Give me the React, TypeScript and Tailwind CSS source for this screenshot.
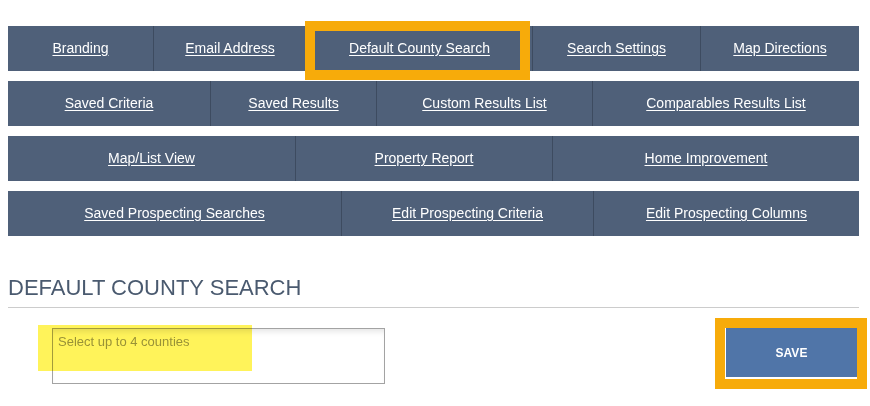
export default function App() {
  const rows: { cols: string; items: string[] }[] = [
    {
      cols: "grid-cols-[145px_153px_226px_168px_159px]",
      items: ["Branding", "Email Address", "Default County Search", "Search Settings", "Map Directions"],
    },
    {
      cols: "grid-cols-[202px_166px_216px_267px]",
      items: ["Saved Criteria", "Saved Results", "Custom Results List", "Comparables Results List"],
    },
    {
      cols: "grid-cols-[287px_257px_307px]",
      items: ["Map/List View", "Property Report", "Home Improvement"],
    },
    {
      cols: "grid-cols-[333px_252px_266px]",
      items: ["Saved Prospecting Searches", "Edit Prospecting Criteria", "Edit Prospecting Columns"],
    },
  ];

  return (
    <div className="min-h-[406px] bg-white font-['Liberation_Sans',Arial,sans-serif]">
      <div className="ml-2 w-[851px] pt-[26px]">
        <div className="relative flex flex-col gap-[10px]">
          {rows.map((row, i) => (
            <div key={i} className={`grid ${row.cols} h-[45px] bg-[#4f6079]`}>
              {row.items.map((label, j) => (
                <a
                  key={label}
                  href="#"
                  className={`flex items-center justify-center text-[14px] text-white underline underline-offset-2 ${
                    j > 0 ? "border-l border-[#3d4b60]" : ""
                  }`}
                >
                  {label}
                </a>
              ))}
            </div>
          ))}
          {/* annotation frame */}
          <div className="pointer-events-none absolute left-[297px] top-[-5px] h-[59px] w-[225px] border-[10px] border-[#f7ab0a]" />
        </div>

        <h2 className="mt-[39px] text-[22px] leading-[26px] text-[#4a5a6f]">DEFAULT COUNTY SEARCH</h2>
        <div className="mt-[6px] h-px bg-[#cccccc]" />

        <div className="mt-[10px] flex items-start justify-between">
          <div className="relative ml-[44px] mt-[10px] h-[56px] w-[333px] border border-[#a3a3a3] bg-white shadow-[inset_0_6px_6px_-4px_rgba(0,0,0,0.12)]">
            <span className="absolute left-[5px] top-[5px] text-[13px] leading-[16px] text-[#999999]">
              Select up to 4 counties
            </span>
            <div className="pointer-events-none absolute left-[-15px] top-[-4px] h-[46px] w-[214px] bg-[#fff35a] mix-blend-multiply" />
          </div>
          <div className="-mr-2 border-[10px] border-[#f7ab0a] bg-white pb-[2px] pl-px">
            <button className="flex h-[49px] w-[131px] items-center justify-center bg-[#5075a8] text-[12px] font-bold text-white">
              SAVE
            </button>
          </div>
        </div>
      </div>
    </div>
  );
}
